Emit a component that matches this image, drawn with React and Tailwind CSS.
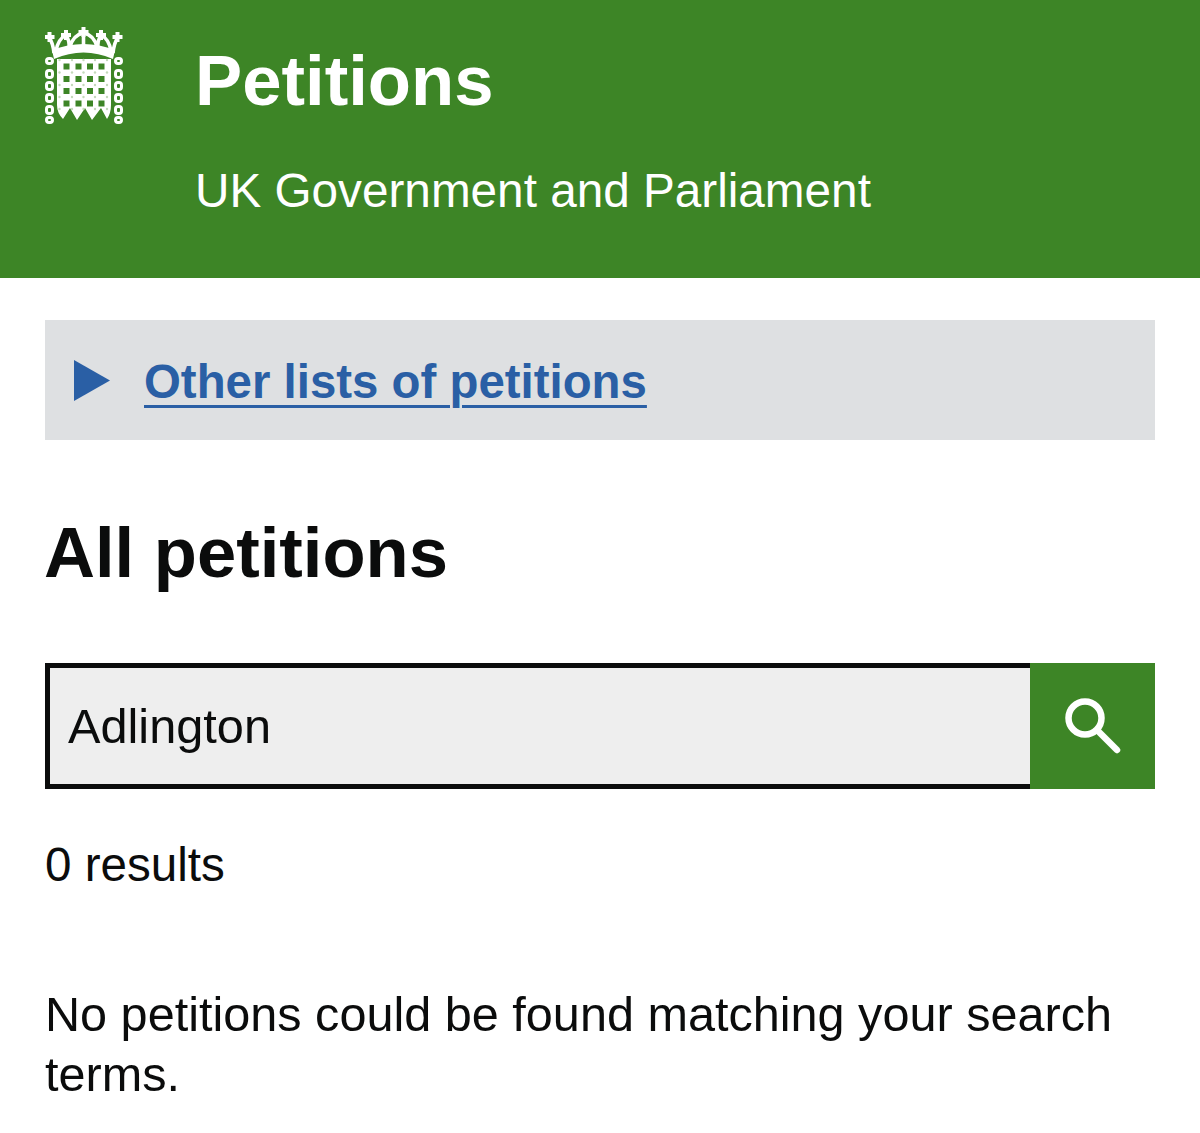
import React from 'react';

const Portcullis = () => {
  const xs = [18.5, 30.5, 42, 53.5];
  const ys = [36.5, 49, 61, 73.5];
  const dotXs = [14.5, 27, 38.5, 50, 62];
  const dotYs = [33, 45.5, 58, 70, 82];
  const links = [34, 46, 58, 70, 82, 93];
  const crosses = [[4.5, 10], [21, 8], [38.5, 5], [56, 8], [72.5, 10]];
  return (
    <svg width="78" height="98" viewBox="0 0 78 98" className="shrink-0">
      {/* crown */}
      <path d="M9 32 Q38.5 19 68 32 L70 23 Q38.5 11 7 23 Z" fill="#fff" />
      <g fill="none" stroke="#fff" strokeWidth="3.6">
        <path d="M4 10 Q8 16 9 26" />
        <path d="M21 8 Q25 14 24 22" />
        <path d="M21 8 Q13 12 11 24" />
        <path d="M38.5 5 V20" />
        <path d="M38.5 6 Q28 8 25 20" />
        <path d="M38.5 6 Q49 8 52 20" />
        <path d="M56 8 Q52 14 53 22" />
        <path d="M56 8 Q64 12 66 24" />
        <path d="M73 10 Q69 16 68 26" />
      </g>
      {crosses.map(([x, y]) => (
        <path key={x} d={`M${x - 2} ${y - 5} h4 v3 h3 v4 h-3 v3 h-4 v-3 h-3 v-4 h3 Z`} fill="#fff" />
      ))}
      {/* gate */}
      <path d="M12 32 H66 V78 Q66 86 62 92 L56 81 L47 93 L40 81 L32 93 L25 81 L18 92 Q12 86 12 78 Z" fill="#fff" />
      {ys.map((y) => xs.map((x) => <rect key={`${x}-${y}`} x={x} y={y} width="6" height="6" fill="#3d8526" />))}
      {dotYs.map((y) => dotXs.map((x) => <circle key={`${x}-${y}`} cx={x} cy={y} r="1.2" fill="#c3d9ba" />))}
      {/* chains */}
      {links.map((y, i) => (
        <g key={y} fill="none" stroke="#fff" strokeWidth="3">
          <rect x="1.5" y={y - 2.5} width="6" height={i % 5 === 0 ? 5 : 7} rx="2.5" />
          <rect x="70.5" y={y - 2.5} width="6" height={i % 5 === 0 ? 5 : 7} rx="2.5" />
        </g>
      ))}
    </svg>
  );
};

export default function App() {
  return (
    <div className="min-h-[1133px] bg-white text-[#0b0c0c] font-['Liberation_Sans',Arial,sans-serif] overflow-hidden">
      {/* Header */}
      <header className="h-[278px] bg-[#3d8526] pl-[45px] pt-[27px] flex text-white">
        <Portcullis />
        <div className="ml-[72px] pt-[14px]">
          <h1 className="text-[70.7px] leading-[80px] font-bold">Petitions</h1>
          <p className="mt-[40px] text-[47.7px] leading-[60px]">UK Government and Parliament</p>
        </div>
      </header>

      <main className="px-[45px]">
        {/* Other lists */}
        <div className="mt-[42px] h-[120px] bg-[#dee0e2] flex items-center pl-[29px]">
          <svg width="36" height="41" viewBox="0 0 36 41" className="shrink-0">
            <path d="M0 0 L36 20.5 L0 41 Z" fill="#2a5fa5" />
          </svg>
          <a href="#" className="ml-[34px] mt-[3px] text-[47.4px] leading-[56px] font-bold text-[#2a5fa5] underline decoration-[3px] underline-offset-[7px]">
            Other lists of petitions
          </a>
        </div>

        <h2 className="mt-[73px] text-[70.6px] leading-[80px] font-bold -ml-[1px]">All petitions</h2>

        {/* Search */}
        <form className="mt-[70px] flex h-[126px]">
          <input
            readOnly
            value="Adlington"
            className="flex-1 min-w-0 h-full border-[5px] border-r-0 border-[#0b0c0c] bg-[#eeeeee] pl-[18px] text-[48.7px] text-[#0b0c0c] outline-none"
          />
          <button type="button" className="w-[125px] h-full bg-[#3d8526] flex items-center justify-center">
            <svg width="56" height="56" viewBox="0 0 56 56" fill="none" stroke="#fff" strokeWidth="6.5" strokeLinecap="round">
              <circle cx="20" cy="20" r="16.5" />
              <path d="M33 33 L52 52" />
            </svg>
          </button>
        </form>

        <p className="mt-[46px] text-[47.6px] leading-[60px]">0 results</p>

        <p className="mt-[89px] text-[48.6px] leading-[60px]">No petitions could be found matching your search terms.</p>
      </main>
    </div>
  );
}
